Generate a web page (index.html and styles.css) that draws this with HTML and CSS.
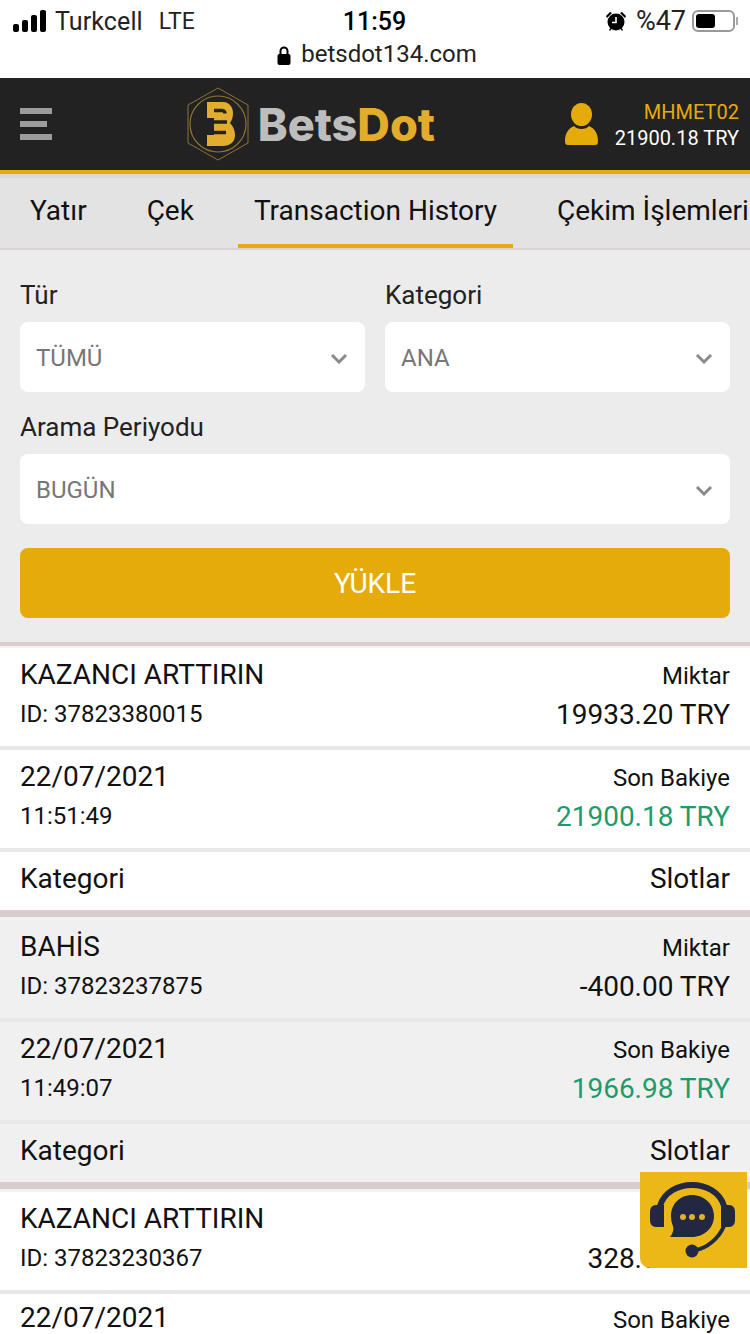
FILE: index.html
```html
<!DOCTYPE html>
<html lang="tr">
<head>
    <meta charset="utf-8">
    <meta name="viewport" content="width=device-width">
    <title>BetsDot</title>
    <link rel="stylesheet" href="styles.css">
</head>
<body>
    <div id="app">
        <div class="status-bar">
            <div class="status-left">
                <svg class="signal" width="34" height="22" viewBox="0 0 34 22"><rect x="0" y="14" width="6" height="8" rx="2"/><rect x="9" y="10" width="6" height="12" rx="2"/><rect x="18" y="5" width="6" height="17" rx="2"/><rect x="27" y="0" width="6" height="22" rx="2"/></svg>
                <span class="carrier">Turkcell</span>
                <span class="lte">LTE</span>
            </div>
            <div class="status-time">11:59</div>
            <div class="status-right">
                <svg width="22" height="22" viewBox="0 0 22 22"><circle cx="11" cy="12" r="8.5"/><path d="M1 6l4-4 2 1-5 5zM21 6l-4-4-2 1 5 5zM4 20l2-3 1 1-2 3zM18 20l-2-3-1 1 2 3z"/><path d="M11 7v5.500H7" fill="none" stroke="#fff" stroke-width="1.600"/></svg>
                <span class="percent">%47</span>
                <div class="battery"><div class="battery-fill"></div></div>
                <div class="battery-tip"></div>
            </div>
        </div>
        <div class="url-bar">
            <svg width="14" height="19" viewBox="0 0 14 19"><path d="M3.500 9V5a3.500 3.500 0 0 1 7 0v4" fill="none" stroke="#000" stroke-width="2"/><rect x="0.500" y="8" width="13" height="11" rx="2"/></svg>
            <span>betsdot134.com</span>
        </div>

        <header class="top-nav">
            <div class="menu-icon"><span></span><span></span><span></span></div>
            <div class="logo">
                <svg width="70" height="78" viewBox="0 0 70 78">
                    <path d="M33 3L63 20V58L33 75L3 58V20Z" fill="none" stroke="#8d7232" stroke-width="1"/>
                    <circle cx="33" cy="39" r="28" fill="none" stroke="#8d7232" stroke-width="1.200"/>
                    <path d="M22 17H38C45 17 48 23 48 28C48 32 47 35 45 38C48 41 50 45 50 50C50 57 45 61 38 61H22V50H29V33H22Z" fill="#e2ad2d"/>
                    <path d="M29 25.500H37C39 25.500 40 27 40 28.500M29 37H42M29 47.500H41" fill="none" stroke="#222" stroke-width="3.500"/>
                </svg>
                <div class="logo-text">Bets<span>Dot</span></div>
            </div>
            <div class="user-box">
                <svg width="33" height="42" viewBox="0 0 33 42"><ellipse cx="16.500" cy="11.500" rx="10.500" ry="11.500"/><path d="M0 38C0 30 4 25 9 23C12 27 21 27 24 23C29 25 33 30 33 38C33 41 32 42 30 42H3C1 42 0 41 0 38Z"/></svg>
                <div class="user-info">
                    <div class="user-name">MHMET02</div>
                    <div class="user-balance">21900.18 TRY</div>
                </div>
            </div>
        </header>

        <nav class="tabs">
            <a class="tab">Yatır</a>
            <a class="tab">Çek</a>
            <a class="tab active">Transaction History</a>
            <a class="tab">Çekim İşlemleri</a>
        </nav>

        <form class="filters">
            <div class="filter-row">
                <div class="field">
                    <label>Tür</label>
                    <div class="select-box"><span>TÜMÜ</span>
                        <svg width="18" height="11" viewBox="0 0 18 11"><path d="M2 2l7 7 7-7" fill="none" stroke="#8a8a8a" stroke-width="3"/></svg>
                    </div>
                </div>
                <div class="field">
                    <label>Kategori</label>
                    <div class="select-box"><span>ANA</span>
                        <svg width="18" height="11" viewBox="0 0 18 11"><path d="M2 2l7 7 7-7" fill="none" stroke="#8a8a8a" stroke-width="3"/></svg>
                    </div>
                </div>
            </div>
            <div class="field">
                <label>Arama Periyodu</label>
                <div class="select-box"><span>BUGÜN</span>
                    <svg width="18" height="11" viewBox="0 0 18 11"><path d="M2 2l7 7 7-7" fill="none" stroke="#8a8a8a" stroke-width="3"/></svg>
                </div>
            </div>
            <div class="submit-btn">YÜKLE</div>
        </form>

        <div class="records">
            <div class="record">
                <div class="rec-row">
                    <div class="left"><div class="big">KAZANCI ARTTIRIN</div><div class="small">ID: 37823380015</div></div>
                    <div class="right"><div class="small">Miktar</div><div class="big">19933.20 TRY</div></div>
                </div>
                <div class="rec-row">
                    <div class="left"><div class="big">22/07/2021</div><div class="small">11:51:49</div></div>
                    <div class="right"><div class="small">Son Bakiye</div><div class="big green">21900.18 TRY</div></div>
                </div>
                <div class="rec-row last">
                    <div class="big">Kategori</div>
                    <div class="big">Slotlar</div>
                </div>
            </div>
            <div class="record alt">
                <div class="rec-row">
                    <div class="left"><div class="big">BAHİS</div><div class="small">ID: 37823237875</div></div>
                    <div class="right"><div class="small">Miktar</div><div class="big">-400.00 TRY</div></div>
                </div>
                <div class="rec-row">
                    <div class="left"><div class="big">22/07/2021</div><div class="small">11:49:07</div></div>
                    <div class="right"><div class="small">Son Bakiye</div><div class="big green">1966.98 TRY</div></div>
                </div>
                <div class="rec-row last">
                    <div class="big">Kategori</div>
                    <div class="big">Slotlar</div>
                </div>
            </div>
            <div class="record">
                <div class="rec-row">
                    <div class="left"><div class="big">KAZANCI ARTTIRIN</div><div class="small">ID: 37823230367</div></div>
                    <div class="right"><div class="small">Miktar</div><div class="big">328.00 TRY</div></div>
                </div>
                <div class="rec-row partial">
                    <div class="big">22/07/2021</div>
                    <div class="small">Son Bakiye</div>
                </div>
            </div>
        </div>

        <div class="chat-float">
            <svg width="107" height="96" viewBox="0 0 107 96">
                <path d="M16 33H24V55H16C12 55 10 52 10 48V40C10 36 12 33 16 33Z" fill="#232842"/>
                <path d="M89 33H81V55H89C93 55 95 52 95 48V40C95 36 93 33 89 33Z" fill="#232842"/>
                <path d="M20 34C24 20 38 13 52 13C66 13 80 20 84 34" fill="none" stroke="#232842" stroke-width="6"/>
                <path d="M52 23C64 23 74 32 74 44C74 56 64 65 52 65H30C33 61 34 58 33 54C31.500 51 31 47 31 44C31 32 40 23 52 23Z" fill="#232842"/>
                <path d="M84 54C78 68 66 76 56 78" fill="none" stroke="#232842" stroke-width="4"/>
                <circle cx="52" cy="79" r="6.500" fill="#232842"/>
                <circle cx="43" cy="45" r="3" fill="#e3b02a"/>
                <circle cx="52" cy="45" r="3" fill="#e3b02a"/>
                <circle cx="62" cy="45" r="3" fill="#e3b02a"/>
            </svg>
        </div>
    </div>
</body>
</html>
```

FILE: styles.css
```css
* {
    box-sizing: border-box;
}

html, body {
    margin: 0;
    padding: 0;
}

body {
    font-family: Roboto, "Liberation Sans", sans-serif;
    color: #111;
    background: #fff;
}

#app {
    position: relative;
    width: 750px;
    height: 1334px;
    overflow: hidden;
}

/* phone chrome */
.status-bar {
    height: 40px;
    padding: 2px 12px 0 13px;
    display: grid;
    grid-template-columns: 1fr auto 1fr;
    align-items: center;
    font-size: 24px;
}

.status-left {
    display: flex;
    align-items: center;
    gap: 8px;
    color: #222;
}

.carrier {
    font-size: 25px;
    letter-spacing: 0.1px;
}

.lte {
    font-size: 23px;
    margin-left: 8px;
}

.status-time {
    font-weight: 500;
    font-size: 25px;
    color: #000;
    padding-right: 2px;
}

.status-right {
    display: flex;
    align-items: center;
    justify-content: flex-end;
    color: #222;
}

.percent {
    font-size: 27px;
    margin: 0 6px 0 9px;
}

.battery {
    width: 43px;
    height: 22px;
    border: 2px solid #999;
    border-radius: 6px;
    padding: 2px;
}

.battery-fill {
    width: 19px;
    height: 14px;
    background: #000;
    border-radius: 3px;
}

.battery-tip {
    width: 2px;
    height: 8px;
    margin-left: 1px;
    background: #aaa;
}

.url-bar {
    height: 38px;
    display: flex;
    align-items: flex-start;
    justify-content: center;
    gap: 10px;
    font-size: 24px;
    color: #222;
    padding-left: 4px;
}

.url-bar svg {
    margin-top: 6px;
}

/* header */
.top-nav {
    height: 96px;
    background: #222;
    border-bottom: 4px solid #e5ab0b;
    padding: 0 11px 0 20px;
    display: flex;
    align-items: center;
    justify-content: space-between;
}

.menu-icon {
    width: 32px;
    height: 32px;
    display: flex;
    flex-direction: column;
    justify-content: space-between;
}

.menu-icon span {
    display: block;
    height: 6px;
    background: #9c9c9c;
}

.menu-icon span:nth-child(2) {
    width: 27px;
}

.logo {
    display: flex;
    align-items: center;
    gap: 3px;
    margin-left: 3px;
}

.logo-text {
    font-family: Inter, Lato, sans-serif;
    font-weight: 800;
    font-size: 45px;
    color: #bdbdbd;
}

.logo-text span {
    color: #e2ad2d;
}

.user-box {
    display: flex;
    align-items: center;
    gap: 17px;
}

.user-box svg {
    fill: #e5ab0b;
}

.user-info {
    text-align: right;
    font-size: 20px;
    line-height: 26px;
    padding-top: 2px;
}

.user-name {
    color: #e5ab0b;
}

.user-balance {
    color: #fff;
}

/* tabs */
.tabs {
    height: 76px;
    padding: 4px 0 0 14px;
    background: #e4e3e4;
    border-top: 4px solid #d9d9d9;
    border-bottom: 2px solid #d8d2d2;
    display: flex;
    gap: 28px;
    white-space: nowrap;
}

.tab {
    padding: 0 16px;
    height: 66px;
    line-height: 58px;
    font-size: 28px;
    color: #111;
}

.tab.active {
    border-bottom: 4px solid #e5ab0b;
}

/* filter form */
.filters {
    height: 392px;
    background: #ececec;
    padding: 28px 20px 0;
}

.filter-row {
    display: flex;
    gap: 20px;
}

.field {
    flex: 1;
    margin-bottom: 18px;
}

.field label {
    display: block;
    font-size: 26px;
    line-height: 34px;
    margin-bottom: 10px;
    color: #222;
}

.select-box {
    height: 70px;
    background: #fff;
    border-radius: 8px;
    padding: 2px 17px 0 16px;
    display: flex;
    align-items: center;
    justify-content: space-between;
    font-size: 24px;
    color: #777;
}

.submit-btn {
    height: 70px;
    margin-top: 24px;
    background: #e5ab0b;
    border-radius: 8px;
    color: #fff;
    font-size: 28px;
    display: flex;
    align-items: center;
    justify-content: center;
}

/* transaction records */
.records {
    border-top: 4px solid #d8cccc;
}

.record {
    padding-top: 2px;
    background: #f2f2f2;
}

.record + .record {
    border-top: 7px solid #d8cccc;
    padding-top: 3px;
}

.rec-row {
    height: 102px;
    padding: 0 20px 4px;
    background: #fff;
    border-bottom: 4px solid #e8e8e8;
    display: flex;
    justify-content: space-between;
    align-items: center;
}

.rec-row.last {
    height: 58px;
    border-bottom: none;
}

.rec-row.partial {
    height: 40px;
    padding: 9px 20px 0;
    align-items: flex-start;
    border-bottom: none;
}

.rec-row.partial .small {
    padding-top: 2px;
    line-height: 30px;
}

.rec-row.partial .big {
    line-height: 30px;
}

.record.alt .rec-row {
    background: #f0f0f0;
}

.left {
    margin-top: -2px;
}

.right {
    margin-top: 2px;
    text-align: right;
}

.big {
    font-size: 28px;
    line-height: 40px;
}

.small {
    font-size: 24px;
    line-height: 38px;
}

.green {
    color: #1f9a6a;
}

/* floating support button */
.chat-float {
    position: absolute;
    left: 640px;
    top: 1172px;
    width: 107px;
    height: 96px;
    background: #ebb817;
    border-bottom-left-radius: 10px;
}

.chat-float svg {
    display: block;
}
```
